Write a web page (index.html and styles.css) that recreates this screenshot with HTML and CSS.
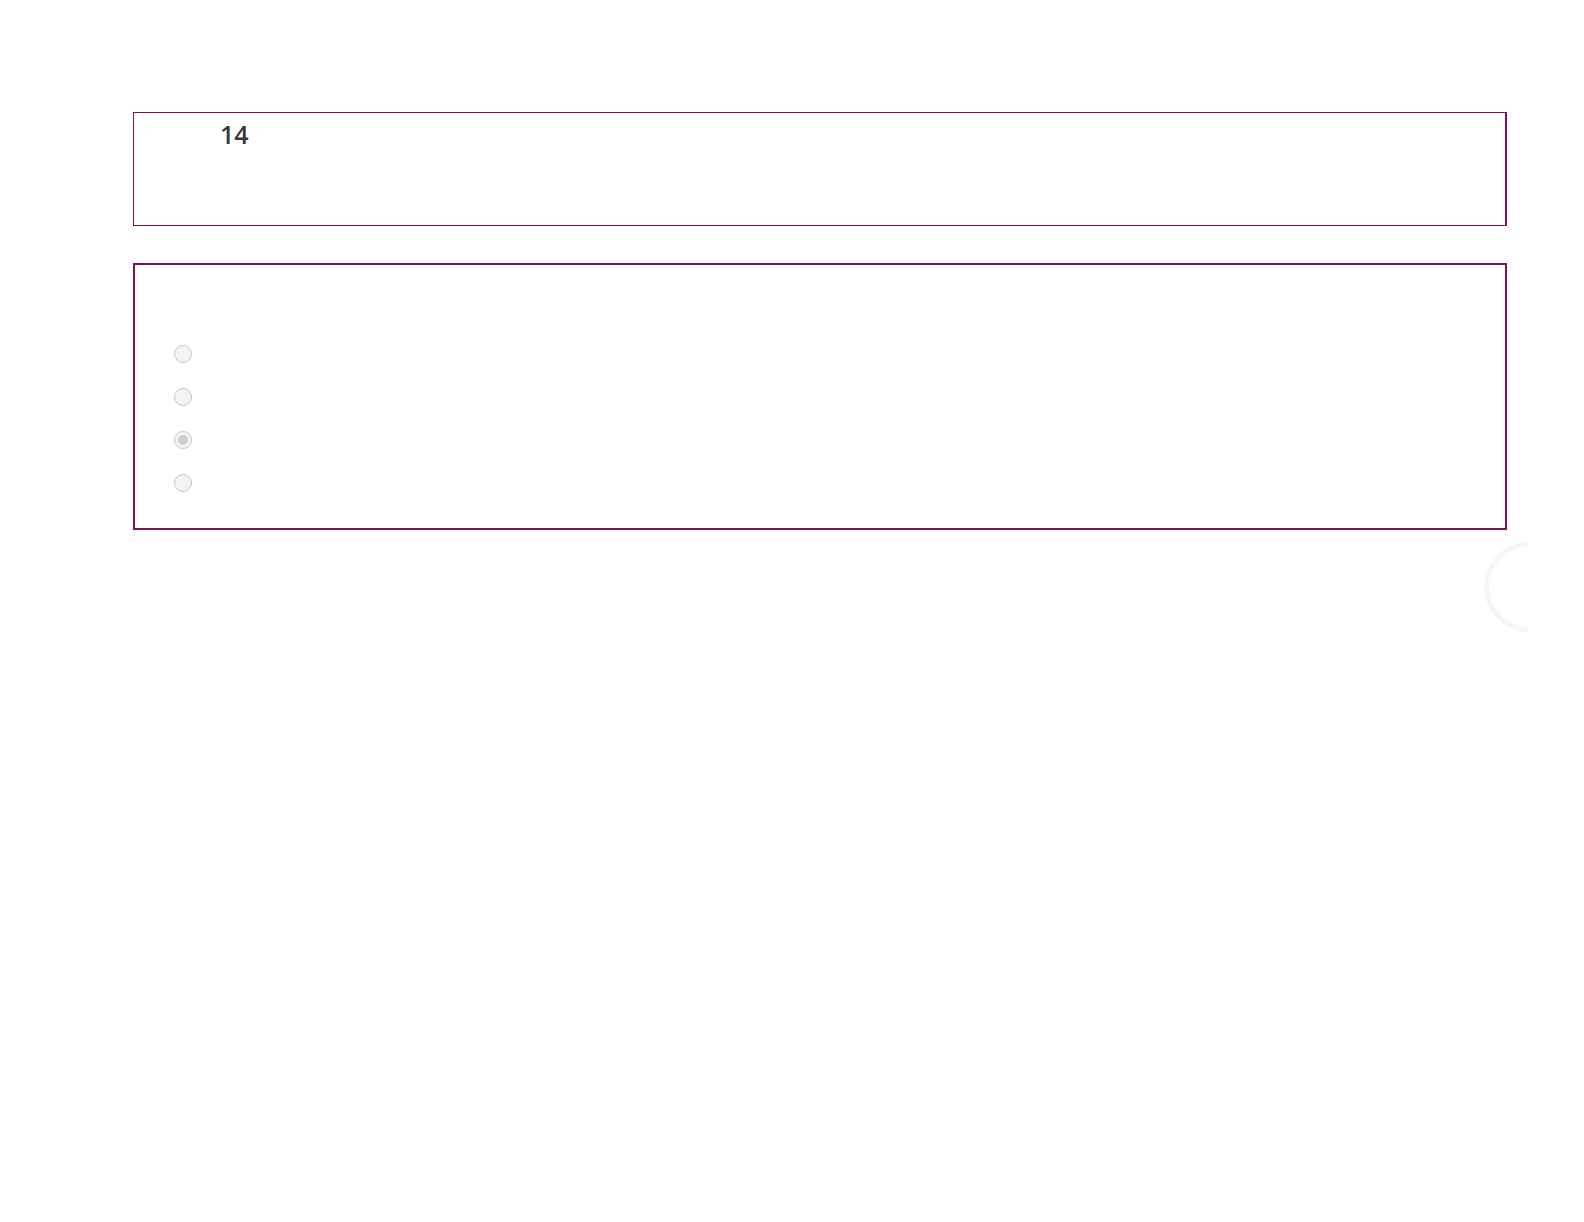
FILE: index.html
```html
<!DOCTYPE html>
<html lang="en">
<head>
    <meta charset="UTF-8">
    <meta name="viewport" content="width=device-width, initial-scale=1.0">
    <title>Question 14</title>
    <link rel="stylesheet" href="styles.css">
</head>
<body>
    <div class="page">
        <div class="panel number-panel">
            <span class="q-number">14</span>
        </div>

        <form class="panel answer-panel">
            <label class="choice"><input type="radio" name="answer" value="a"></label>
            <label class="choice"><input type="radio" name="answer" value="b"></label>
            <label class="choice"><input type="radio" name="answer" value="c" checked></label>
            <label class="choice"><input type="radio" name="answer" value="d"></label>
        </form>
    </div>

    <!-- loading ring, half hidden at the edge -->
    <div class="loader"><div class="ring"></div></div>
</body>
</html>
```

FILE: styles.css
```css
body { margin: 0; background: #fff; font-family: "Open Sans", Arial, sans-serif; color: #333; }
.page { margin-left: 133px; padding-top: 112px; width: 1374px; }
.panel { box-sizing: border-box; width: 100%; }
.number-panel { border: 1px solid #800f5a; border-right-width: 2px; height: 114px; padding: 4px 0 0 86px; }
.q-number { font-size: 25px; font-weight: 600; color: #383838; }
.answer-panel { border: 2px solid #800f5a; margin-top: 37px; height: 267px; padding: 80px 0 0 39px; display: flex; flex-direction: column; gap: 25px; }
.choice { display: block; width: 18px; height: 18px; }
.choice input { appearance: none; -webkit-appearance: none; margin: 0; box-sizing: border-box; width: 18px; height: 18px; border-radius: 50%; border: 1.5px solid #c8c8c8; background: #f4f4f4; display: grid; place-items: center; }
.choice input:checked::after { content: ""; width: 10px; height: 10px; border-radius: 50%; background: #cccccc; }
.loader { position: absolute; left: 1484px; top: 542px; width: 44px; height: 90px; overflow: hidden; }
.ring { box-sizing: border-box; width: 90px; height: 90px; border-radius: 50%; border: 5px solid #f6f6f6; }
```
